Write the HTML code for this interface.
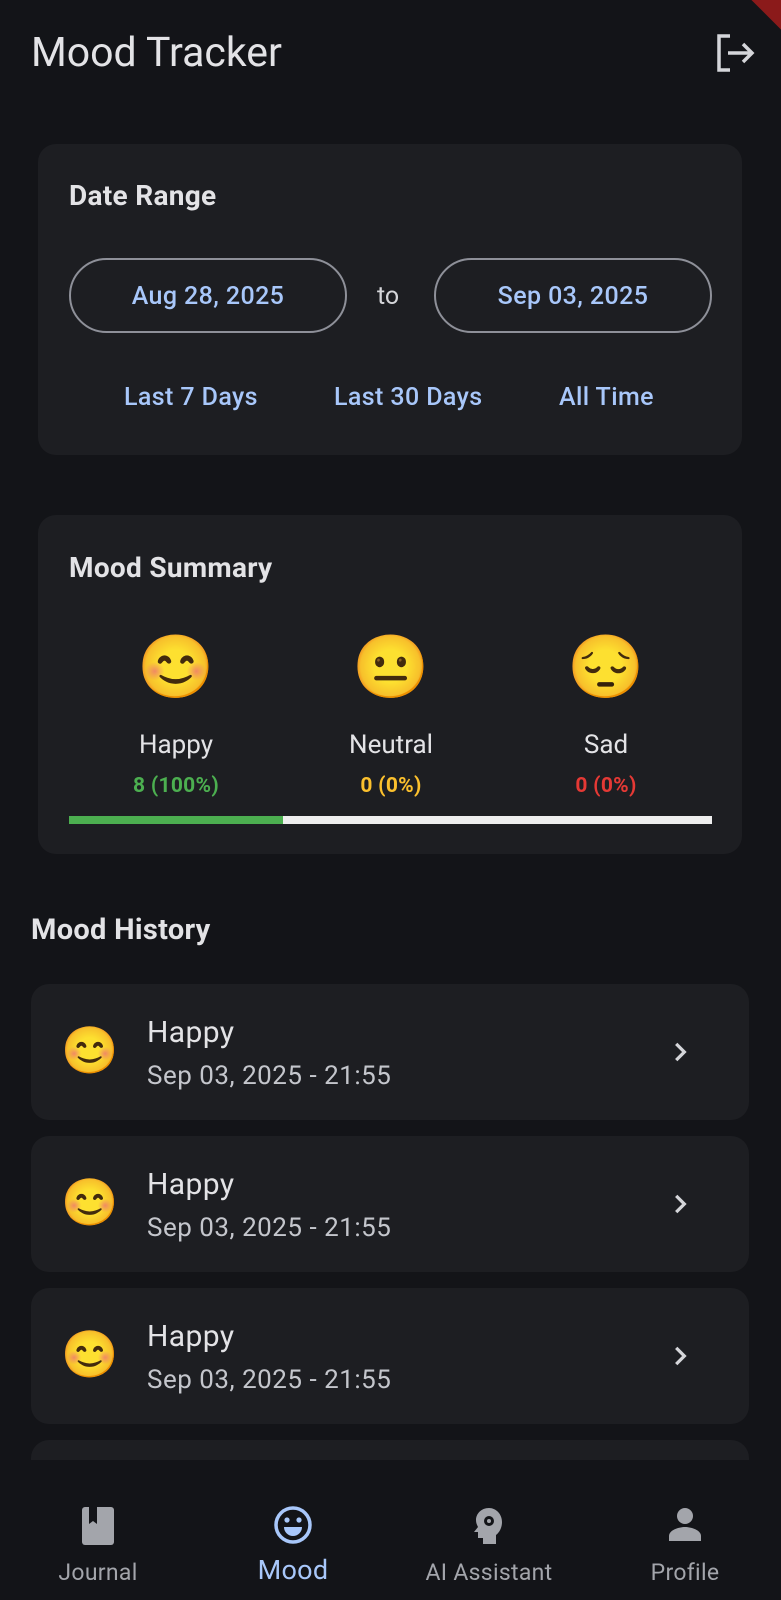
<!DOCTYPE html>
<html><head><meta charset="utf-8"><style>
*{box-sizing:border-box;margin:0;padding:0}
body{width:781px;height:1600px;background:#131418;font-family:"Roboto","Liberation Sans",sans-serif;color:#e3e3e6;position:relative;overflow:hidden}
.abs{position:absolute}
.card{position:absolute;background:#1d1e22;border-radius:18px}
.pill{position:absolute;border:2px solid #8e9099;border-radius:38px;height:75px;top:114px;width:278px;color:#a8c7fa;font-size:25px;letter-spacing:.4px;text-align:center;line-height:73px;font-weight:500}
.link{position:absolute;top:239px;color:#a8c7fa;font-size:25px;font-weight:500;letter-spacing:.4px}
.emo{position:absolute;font-family:"Noto Color Emoji",sans-serif;font-size:62px;line-height:72px;width:100px;text-align:center}
.lbl{position:absolute;width:200px;text-align:center;font-size:26px;color:#e3e3e6}
.cnt{position:absolute;width:200px;text-align:center;font-size:21px;font-weight:bold;letter-spacing:.3px}
.item{position:absolute;left:31px;width:718px;height:136px;background:#1d1e22;border-radius:18px}
.item .e{position:absolute;left:30px;top:41px;font-family:"Noto Color Emoji",sans-serif;font-size:46px;line-height:52px}
.item .t{position:absolute;left:116px;top:31px;font-size:30px;color:#e3e3e6;letter-spacing:.4px}
.item .d{position:absolute;left:116px;top:77px;font-size:26px;color:#c4c6cc;letter-spacing:.5px}
.item svg{position:absolute;left:636px;top:55px}
.nav{position:absolute;top:1460px;left:0;width:781px;height:140px;background:#131418}
.nl{position:absolute;top:99px;width:200px;text-align:center;font-size:23px;color:#a3a5ab;letter-spacing:.3px}
</style></head><body>
<div class="abs" style="left:31px;top:29px;font-size:41px;color:#e3e3e6">Mood Tracker</div>
<svg class="abs" style="left:714px;top:33px" width="44" height="40" viewBox="0 0 44 40"><path d="M16 3H5v34h11" fill="none" stroke="#d5d6da" stroke-width="3.5"/><path d="M14 20h24M29 11l9 9-9 9" fill="none" stroke="#d5d6da" stroke-width="3.5"/></svg>
<div class="abs" style="right:-30px;top:-12px;width:90px;height:22px;background:#8b1a1a;transform:rotate(45deg)"></div>

<div class="card" style="left:38px;top:144px;width:704px;height:311px">
<div class="abs" style="left:31px;top:35px;font-size:28px;font-weight:bold;color:#e3e3e6;letter-spacing:.3px">Date Range</div>
<div class="pill" style="left:31px">Aug 28, 2025</div>
<div class="abs" style="left:339px;top:138px;font-size:25px;color:#d5d6da">to</div>
<div class="pill" style="left:396px">Sep 03, 2025</div>
<div class="link" style="left:86px">Last 7 Days</div>
<div class="link" style="left:296px">Last 30 Days</div>
<div class="link" style="left:521px">All Time</div>
</div>

<div class="card" style="left:38px;top:515px;width:704px;height:339px">
<div class="abs" style="left:31px;top:36px;font-size:28px;font-weight:bold;color:#e3e3e6;letter-spacing:.3px">Mood Summary</div>
<div class="emo" style="left:88px;top:117px">😊</div>
<div class="emo" style="left:303px;top:117px">😐</div>
<div class="emo" style="left:518px;top:117px">😔</div>
<div class="lbl" style="left:38px;top:215px">Happy</div>
<div class="lbl" style="left:253px;top:215px">Neutral</div>
<div class="lbl" style="left:468px;top:215px">Sad</div>
<div class="cnt" style="left:38px;top:259px;color:#4caf50">8 (100%)</div>
<div class="cnt" style="left:253px;top:259px;color:#fbc02d">0 (0%)</div>
<div class="cnt" style="left:468px;top:259px;color:#e53935">0 (0%)</div>
<div class="abs" style="left:31px;top:301px;width:643px;height:8px;background:#eeeeee"></div>
<div class="abs" style="left:31px;top:301px;width:214px;height:8px;background:#4caf50"></div>
</div>

<div class="abs" style="left:31px;top:913px;font-size:29px;font-weight:bold;color:#e3e3e6;letter-spacing:.3px">Mood History</div>

<div class="item" style="top:984px"><div class="e">😊</div><div class="t">Happy</div><div class="d">Sep 03, 2025 - 21:55</div><svg width="26" height="26" viewBox="0 0 24 24"><path d="M8.5 4.5l7.5 7.5-7.5 7.5" fill="none" stroke="#d5d6da" stroke-width="3"/></svg></div>
<div class="item" style="top:1136px"><div class="e">😊</div><div class="t">Happy</div><div class="d">Sep 03, 2025 - 21:55</div><svg width="26" height="26" viewBox="0 0 24 24"><path d="M8.5 4.5l7.5 7.5-7.5 7.5" fill="none" stroke="#d5d6da" stroke-width="3"/></svg></div>
<div class="item" style="top:1288px"><div class="e">😊</div><div class="t">Happy</div><div class="d">Sep 03, 2025 - 21:55</div><svg width="26" height="26" viewBox="0 0 24 24"><path d="M8.5 4.5l7.5 7.5-7.5 7.5" fill="none" stroke="#d5d6da" stroke-width="3"/></svg></div>
<div class="item" style="top:1440px"></div>

<div class="nav">
<svg class="abs" style="left:82px;top:47px" width="32" height="38" viewBox="0 0 32 38"><rect x="0" y="0" width="32" height="38" rx="3" fill="#a3a5ab"/><path d="M7 0v17l4-3 4 3V0z" fill="#131418"/></svg>
<svg class="abs" style="left:273px;top:45px" width="40" height="40" viewBox="0 0 40 40"><circle cx="20" cy="20" r="17" fill="none" stroke="#a8c7fa" stroke-width="3.5"/><circle cx="14" cy="15" r="2.6" fill="#a8c7fa"/><circle cx="26" cy="15" r="2.6" fill="#a8c7fa"/><path d="M11 22h18a9 9 0 0 1-18 0z" fill="#a8c7fa"/></svg>
<svg class="abs" style="left:473px;top:47px" width="32" height="38" viewBox="0 0 32 38"><path d="M16 1C8 1 3 7 3 13c0 3 1 5 2 7l-4 5h4v6h5v6h13V28c4-3 6-8 6-13C29 7 23 1 16 1z" fill="#a3a5ab"/><circle cx="16" cy="14" r="5" fill="#131418"/><circle cx="16" cy="14" r="2" fill="#a3a5ab"/></svg>
<svg class="abs" style="left:668px;top:47px" width="34" height="34" viewBox="0 0 34 34"><circle cx="17" cy="9" r="8" fill="#a3a5ab"/><path d="M1 34v-5c0-6 10-9 16-9s16 3 16 9v5z" fill="#a3a5ab"/></svg>
<div class="nl" style="left:-2px">Journal</div>
<div class="nl" style="left:193px;top:94px;font-size:27px;color:#a8c7fa">Mood</div>
<div class="nl" style="left:389px">AI Assistant</div>
<div class="nl" style="left:585px">Profile</div>
</div>
</body></html>
